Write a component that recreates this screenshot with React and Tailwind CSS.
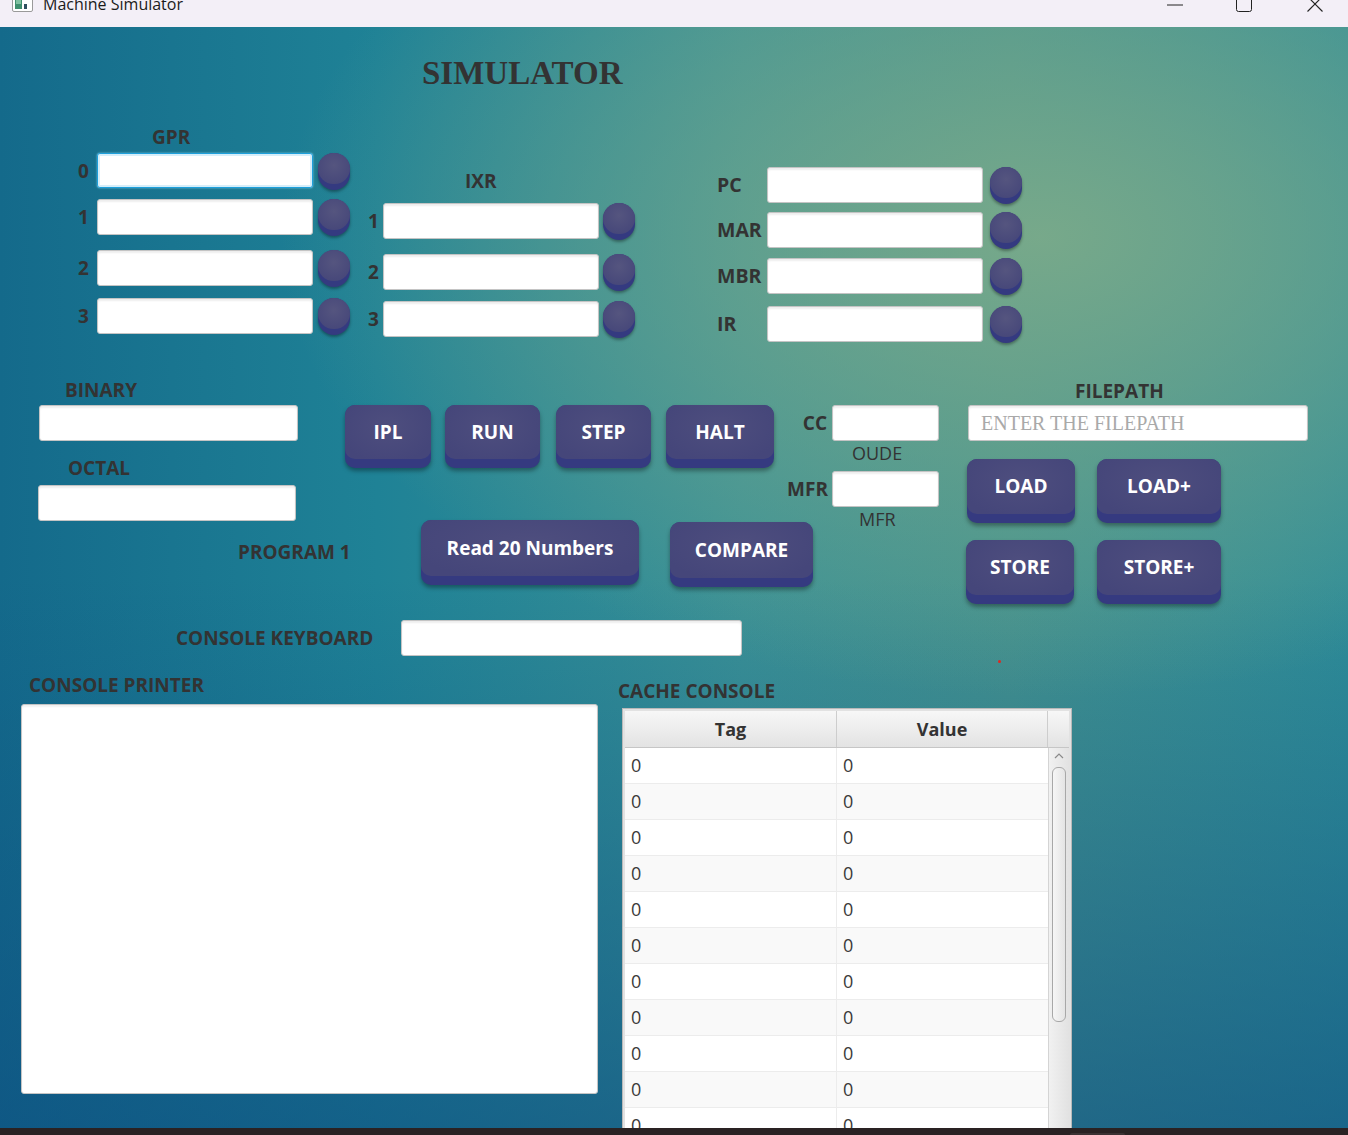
import React from "react";

function Field({ className = "" }) {
  return (
    <div
      className={
        "h-[36px] rounded-[3px] border border-[#c4c4c4] bg-white shadow-[inset_0_2px_2px_rgba(0,0,0,0.07)] " +
        className
      }
    />
  );
}

function Knob() {
  return (
    <div className="h-[37px] w-[32px] shrink-0 rounded-[16px] bg-[#343a80] shadow-[0_2px_3px_rgba(0,0,0,0.35)]">
      <div className="h-[31px] w-[32px] rounded-full bg-[radial-gradient(circle_at_50%_40%,#55557f_0%,#47487a_75%)]" />
    </div>
  );
}

function Btn({ label, className = "" }) {
  return (
    <div
      className={
        "flex shrink-0 flex-col rounded-[10px] bg-[#353a80] pb-[9px] shadow-[0_3px_4px_rgba(0,0,0,0.35)] " +
        className
      }
    >
      <div className="flex flex-1 items-center justify-center whitespace-nowrap rounded-[10px] bg-[radial-gradient(ellipse_at_50%_40%,#4e4e7e_0%,#45467a_80%)] text-[19px] font-bold text-white">
        {label}
      </div>
    </div>
  );
}

function Label({ children, className = "" }) {
  return (
    <div className={"whitespace-nowrap text-[19px] leading-[24px] font-bold text-[#333] " + className}>
      {children}
    </div>
  );
}

const gpr = [
  { n: "0", mt: "mt-[4px]", focus: true },
  { n: "1", mt: "mt-[9px]" },
  { n: "2", mt: "mt-[14px]" },
  { n: "3", mt: "mt-[11px]" },
];

const ixr = [
  { n: "1", mt: "mt-[10px]" },
  { n: "2", mt: "mt-[14px]" },
  { n: "3", mt: "mt-[10px]" },
];

const regs = [
  { n: "PC", mt: "mt-[74px]" },
  { n: "MAR", mt: "mt-[8px]" },
  { n: "MBR", mt: "mt-[9px]" },
  { n: "IR", mt: "mt-[11px]" },
];

const rows = Array.from({ length: 12 }, (_, i) => i);

export default function App() {
  return (
    <div className="flex h-[1135px] w-[1348px] flex-col overflow-hidden font-['Open_Sans',sans-serif]">
      {/* window title bar */}
      <div className="flex h-[27px] shrink-0 items-start overflow-hidden bg-[#f3eff7]">
        <svg className="ml-[12px] mt-[-4px]" width="21" height="16" viewBox="0 0 21 16">
          <rect x="0.5" y="0.5" width="20" height="15" rx="1.5" fill="#fff" stroke="#9a9a9a" />
          <rect x="3" y="3" width="7" height="10" fill="#3f8f6e" />
          <rect x="4" y="4" width="5" height="4" fill="#7fc1a0" />
          <rect x="12" y="8" width="3" height="5" fill="#2f4f5f" />
        </svg>
        <div className="ml-[10px] mt-[-6px] text-[16px] leading-[20px] text-[#1b1b1b]">Machine Simulator</div>
        <div className="flex-1" />
        <svg className="mr-[53px] mt-[4px]" width="16" height="2" viewBox="0 0 16 2">
          <line x1="0" y1="1" x2="16" y2="1" stroke="#222" strokeWidth="1" />
        </svg>
        <svg className="mr-[55px] mt-[-5px]" width="16" height="17" viewBox="0 0 16 17">
          <rect x="0.5" y="0.5" width="15" height="16" rx="2" fill="none" stroke="#222" strokeWidth="1" />
        </svg>
        <svg className="mr-[25px] mt-[-4px]" width="16" height="16" viewBox="0 0 16 16">
          <line x1="0.5" y1="0.5" x2="15.5" y2="15.5" stroke="#222" strokeWidth="1.1" />
          <line x1="15.5" y1="0.5" x2="0.5" y2="15.5" stroke="#222" strokeWidth="1.1" />
        </svg>
      </div>

      {/* main pane */}
      <div className="relative flex h-[1101px] shrink-0 flex-col overflow-hidden bg-[radial-gradient(ellipse_760px_460px_at_1040px_210px,rgba(122,170,138,0.95)_0%,rgba(122,170,138,0)_100%),linear-gradient(180deg,rgba(14,80,130,0)_0%,rgba(14,80,130,0)_50%,rgba(12,76,128,0.6)_100%),linear-gradient(90deg,#146a8b_0%,#1f8296_28%,#3a9196_55%,#43928f_75%,#2f8d98_100%)]">
        <div className="ml-[422px] mt-[26px] h-[40px] font-['Liberation_Serif',serif] text-[33px] leading-[40px] font-bold text-[#333]">
          SIMULATOR
        </div>

        {/* registers */}
        <div className="flex h-[252px] shrink-0 items-start pl-[78px]">
          <div className="flex w-[272px] flex-col">
            <Label className="ml-[74px] mt-[32px]">GPR</Label>
            {gpr.map((r) => (
              <div key={r.n} className={"flex items-start " + r.mt}>
                <div className="flex h-[36px] w-[19px] items-center text-[19px] font-bold text-[#333]">{r.n}</div>
                {r.focus ? (
                  <div className="h-[35px] w-[216px] rounded-[3px] border-[1.5px] border-[#1ea0dc] bg-white shadow-[inset_0_0_0_2px_#d6eef9,0_0_2px_#7fd0f0]" />
                ) : (
                  <Field className="w-[216px]" />
                )}
                <div className="ml-[5px]">
                  <Knob />
                </div>
              </div>
            ))}
          </div>

          <div className="ml-[18px] flex w-[267px] flex-col">
            <Label className="ml-[97px] mt-[76px]">IXR</Label>
            {ixr.map((r) => (
              <div key={r.n} className={"flex items-start " + r.mt}>
                <div className="flex h-[36px] w-[15px] items-center text-[19px] font-bold text-[#333]">{r.n}</div>
                <Field className="w-[216px]" />
                <div className="ml-[4px]">
                  <Knob />
                </div>
              </div>
            ))}
          </div>

          <div className="ml-[82px] flex flex-col">
            {regs.map((r) => (
              <div key={r.n} className={"flex items-start " + r.mt}>
                <div className="flex h-[36px] w-[50px] items-center text-[19.5px] font-bold text-[#333]">{r.n}</div>
                <Field className="w-[216px]" />
                <div className="ml-[7px]">
                  <Knob />
                </div>
              </div>
            ))}
          </div>
        </div>

        {/* controls */}
        <div className="flex h-[260px] shrink-0 items-start pl-[38px]">
          <div className="flex w-[307px] shrink-0 flex-col">
            <Label className="ml-[27px] mt-[33px]">BINARY</Label>
            <Field className="ml-[1px] mt-[3px] w-[259px]" />
            <Label className="ml-[30px] mt-[15px]">OCTAL</Label>
            <Field className="mt-[5px] w-[258px]" />
            <Label className="ml-[200px] mt-[19px]">PROGRAM 1</Label>
          </div>

          <div className="flex w-[442px] shrink-0 flex-col">
            <div className="mt-[60px] flex items-start">
              <Btn label="IPL" className="h-[63px] w-[86px]" />
              <Btn label="RUN" className="ml-[14px] h-[63px] w-[95px]" />
              <Btn label="STEP" className="ml-[16px] h-[63px] w-[95px]" />
              <Btn label="HALT" className="ml-[15px] h-[63px] w-[108px]" />
            </div>
            <div className="mt-[52px] flex items-start">
              <Btn label="Read 20 Numbers" className="ml-[76px] h-[65px] w-[218px]" />
              <Btn label="COMPARE" className="ml-[31px] mt-[2px] h-[65px] w-[143px]" />
            </div>
          </div>

          <div className="flex w-[179px] shrink-0 flex-col">
            <div className="mt-[60px] flex items-center">
              <div className="w-[41px] pr-[1px] text-right text-[19px] font-bold text-[#333]">CC</div>
              <Field className="ml-[4px] w-[107px]" />
            </div>
            <div className="ml-[65px] mt-[1px] text-[18px] leading-[22px] text-[#333]">OUDE</div>
            <div className="mt-[7px] flex items-center">
              <div className="w-[41px] text-right text-[19px] font-bold text-[#333]">MFR</div>
              <Field className="ml-[4px] w-[107px]" />
            </div>
            <div className="ml-[72px] mt-[1px] text-[18px] leading-[22px] text-[#333]">MFR</div>
          </div>

          <div className="flex flex-col">
            <Label className="ml-[109px] mt-[34px]">FILEPATH</Label>
            <div className="ml-[2px] mt-[2px] flex h-[36px] w-[340px] items-center whitespace-nowrap rounded-[3px] border border-[#c4c4c4] bg-white pl-[12px] font-['Liberation_Serif',serif] text-[20px] text-[#a9a9a9] shadow-[inset_0_2px_2px_rgba(0,0,0,0.07)]">
              ENTER THE FILEPATH
            </div>
            <div className="mt-[18px] flex items-start">
              <Btn label="LOAD" className="ml-[1px] h-[64px] w-[108px]" />
              <Btn label="LOAD+" className="ml-[22px] h-[64px] w-[124px]" />
            </div>
            <div className="mt-[17px] flex items-start">
              <Btn label="STORE" className="h-[64px] w-[108px]" />
              <Btn label="STORE+" className="ml-[23px] h-[64px] w-[124px]" />
            </div>
          </div>
        </div>

        {/* console keyboard */}
        <div className="mt-[15px] flex h-[36px] shrink-0 items-center pl-[176px]">
          <div className="w-[225px] whitespace-nowrap text-[19px] font-bold text-[#333]">CONSOLE KEYBOARD</div>
          <Field className="w-[341px]" />
        </div>

        <div className="absolute left-[998px] top-[633px] h-[3px] w-[3px] rounded-full bg-[#e2261f]" />

        {/* printer + cache */}
        <div className="flex flex-1 items-start pl-[21px]">
          <div className="flex flex-col">
            <Label className="ml-[8px] mt-[17px]">CONSOLE PRINTER</Label>
            <div className="mt-[7px] h-[390px] w-[577px] rounded-[3px] border border-[#c4c4c4] bg-white shadow-[inset_0_2px_2px_rgba(0,0,0,0.06)]" />
          </div>

          <div className="ml-[20px] flex flex-col">
            <Label className="mt-[23px]">CACHE CONSOLE</Label>
            <div className="ml-[4px] mt-[5px] h-[430px] w-[450px] border border-[#b9b9b9] bg-[#e2e2e2] p-[2px]">
              <div className="flex h-full flex-col bg-white">
                <div className="flex h-[37px] shrink-0 border-b border-[#c6c6c6] bg-[linear-gradient(180deg,#f7f7f7_0%,#e3e3e3_100%)] text-[18px] font-bold text-[#333]">
                  <div className="flex w-[212px] items-center justify-center border-r border-[#cdcdcd]">Tag</div>
                  <div className="flex w-[211px] items-center justify-center border-r border-[#cdcdcd]">Value</div>
                  <div className="flex-1" />
                </div>
                <div className="flex flex-1 overflow-hidden">
                  <div className="flex w-[423px] flex-col">
                    {rows.map((i) => (
                      <div
                        key={i}
                        className={
                          "flex h-[36px] shrink-0 border-b border-[#ececec] text-[18px] text-[#3a3a3a] " +
                          (i % 2 === 0 ? "bg-white" : "bg-[#f9f9f9]")
                        }
                      >
                        <div className="flex w-[212px] items-center border-r border-[#ececec] pl-[6px]">0</div>
                        <div className="flex w-[211px] items-center pl-[6px]">0</div>
                      </div>
                    ))}
                  </div>
                  <div className="flex flex-1 flex-col items-center border-l border-[#d4d4d4] bg-[linear-gradient(90deg,#f1f1f1_0%,#e2e2e2_100%)]">
                    <svg className="mt-[5px]" width="10" height="6" viewBox="0 0 10 6">
                      <polyline points="1,5 5,1 9,5" fill="none" stroke="#8a8a8a" strokeWidth="1.2" />
                    </svg>
                    <div className="mt-[8px] h-[255px] w-[14px] rounded-[6px] border border-[#a8a8a8] bg-[linear-gradient(90deg,#f6f6f6_0%,#e4e4e4_100%)]" />
                  </div>
                </div>
              </div>
            </div>
          </div>
        </div>
      </div>

      <div className="flex h-[7px] shrink-0 bg-[#2a2223]">
        <div className="ml-[1070px] mt-[5px] h-[2px] w-[55px] rounded-t-[2px] bg-[#3b3233]" />
      </div>
    </div>
  );
}
